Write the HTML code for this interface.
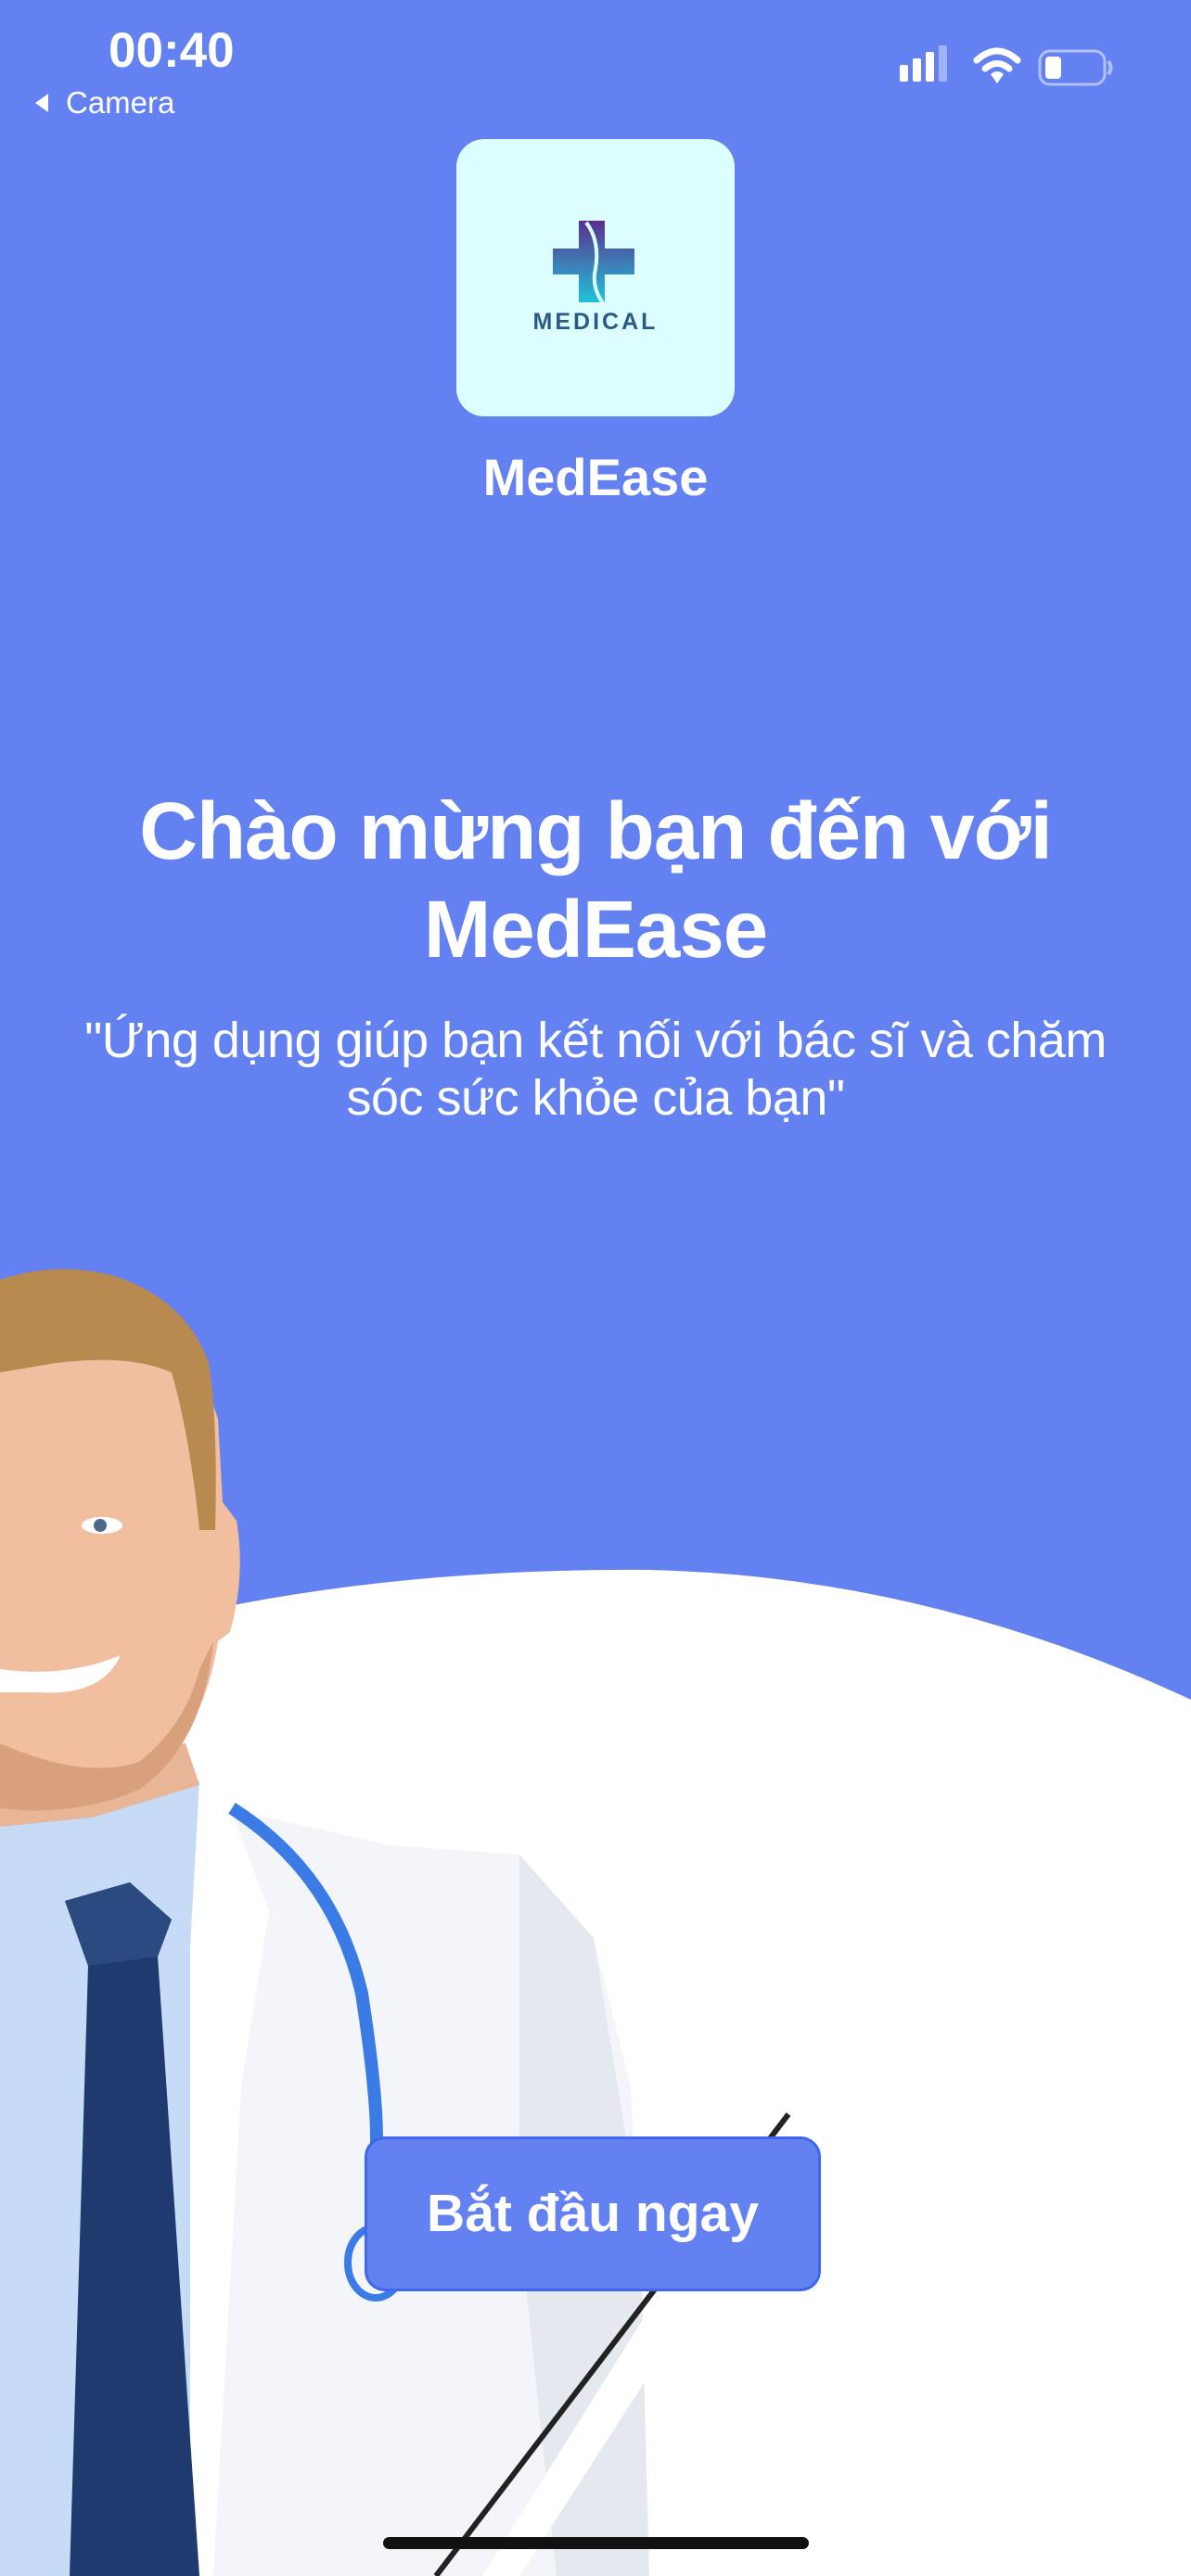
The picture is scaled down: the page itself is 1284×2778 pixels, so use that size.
<!DOCTYPE html>
<html><head><meta charset="utf-8"><style>
html,body{margin:0;padding:0}
body{width:1284px;height:2778px;position:relative;overflow:hidden;background:#6381F1;font-family:"Liberation Sans","Noto Sans CJK SC",sans-serif;color:#fff}
.abs{position:absolute}
.c{left:0;width:1284px;text-align:center}
</style></head><body>
<svg class="abs" style="left:0;top:0" width="1284" height="2778" viewBox="0 0 1284 2778">
  <path d="M0 1800 Q300 1690 700 1693 Q1000 1700 1284 1833 L1284 2778 L0 2778 Z" fill="#fff"/>
  <path d="M0 1990 L200 1940 L420 1990 L560 2000 L640 2090 L680 2250 L690 2500 L700 2778 L0 2778 Z" fill="#F3F5F9"/>
  <path d="M560 2000 L640 2090 L690 2400 L700 2778 L600 2778 L560 2400 Z" fill="#E4E8EF"/>
  <path d="M0 1950 L190 1920 L215 1920 L225 2080 L215 2778 L0 2778 Z" fill="#C6DCF6"/>
  <path d="M215 1920 L240 1930 L290 2060 L260 2250 L230 2778 L205 2778 L205 2100 Z" fill="#fff"/>
  <path d="M70 2050 L140 2030 L185 2070 L170 2110 L215 2778 L75 2778 L95 2120 Z" fill="#1F3A6E"/>
  <path d="M70 2050 L140 2030 L185 2070 L170 2110 L95 2120 Z" fill="#2A4A80"/>
  <path d="M250 1950 Q360 2020 390 2150 Q410 2280 405 2330" stroke="#3B7BE6" stroke-width="14" fill="none"/>
  <ellipse cx="405" cy="2440" rx="30" ry="38" fill="none" stroke="#3B7BE6" stroke-width="8"/>
  <path d="M850 2280 L470 2778" stroke="#222" stroke-width="6"/>
  <path d="M700 2490 L520 2778 L560 2778 L720 2530 Z" fill="#fff"/>
  <path d="M0 1900 L200 1880 L215 1925 L100 1960 L0 1970 Z" fill="#E8B596"/>
  <path d="M0 1400 L120 1380 L200 1430 L235 1530 L240 1620 L255 1640 Q265 1700 248 1760 L235 1770 Q220 1870 150 1930 Q80 1960 0 1950 Z" fill="#F1BFA0"/>
  <path d="M0 1880 Q90 1920 150 1900 Q200 1860 215 1800 L230 1770 Q220 1880 150 1930 Q80 1960 0 1950 Z" fill="#D9A07C"/>
  <path d="M0 1380 Q60 1360 120 1375 Q200 1400 225 1470 Q235 1530 232 1650 L215 1650 Q205 1550 185 1480 Q140 1460 60 1470 L0 1480 Z" fill="#B98A50"/>
  <ellipse cx="110" cy="1645" rx="22" ry="9" fill="#fff"/>
  <circle cx="108" cy="1645" r="7" fill="#4B6A8A"/>
  <path d="M0 1800 Q70 1810 130 1785 Q110 1830 40 1825 L0 1825 Z" fill="#fff"/>
  <rect x="970" y="70" width="9" height="18" rx="2" fill="#fff"/>
  <rect x="984" y="63" width="9" height="25" rx="2" fill="#fff"/>
  <rect x="998" y="56" width="9" height="32" rx="2" fill="#fff"/>
  <rect x="1012" y="49" width="9" height="39" rx="2" fill="#fff" opacity=".4"/>
  <path d="M1053 65 Q1075 45 1097 65" stroke="#fff" stroke-width="7" fill="none" stroke-linecap="round"/>
  <path d="M1062 74 Q1075 63 1088 74" stroke="#fff" stroke-width="7" fill="none" stroke-linecap="round"/>
  <path d="M1068 80 L1075 90 L1082 80 Q1075 74 1068 80 Z" fill="#fff"/>
  <rect x="1121" y="55" width="70" height="36" rx="11" fill="none" stroke="#fff" stroke-opacity=".5" stroke-width="3"/>
  <rect x="1127" y="61" width="17" height="24" rx="4" fill="#fff"/>
  <path d="M1195 66 Q1200 73 1195 80" stroke="#fff" stroke-opacity=".5" stroke-width="4" fill="none"/>
  <path d="M38 111 L52 101 L52 121 Z" fill="#fff"/>
  <rect x="413" y="2736" width="459" height="13" rx="6.5" fill="#111"/>
</svg>
<div class="abs" style="left:117px;top:24px;font-size:53px;font-weight:bold">00:40</div>
<div class="abs" style="left:71px;top:92px;font-size:33px">Camera</div>
<div class="abs" style="left:492px;top:150px;width:300px;height:299px;background:#DDFEFE;border-radius:30px">
  <svg width="300" height="299" viewBox="0 0 300 299">
    <defs><linearGradient id="g" x1="0" y1="0" x2="0" y2="1"><stop offset="0" stop-color="#5B2F8E"/><stop offset="1" stop-color="#22C3D8"/></linearGradient></defs>
    <path d="M104 118 H132 V88 H160 V118 H192 V146 H160 V176 H132 V146 H104 Z" fill="url(#g)"/>
    <path d="M140 90 Q155 110 150 140 Q145 160 160 180" stroke="#DDFEFE" stroke-width="4" fill="none"/>
    <text x="150" y="205" text-anchor="middle" font-family="Liberation Sans" font-weight="bold" font-size="25" letter-spacing="3" fill="#2C5A86">MEDICAL</text>
  </svg>
</div>
<div class="abs c" style="top:482px;font-size:56px;font-weight:bold">MedEase</div>
<div class="abs c" style="top:844px;font-size:87px;font-weight:bold;line-height:106px;letter-spacing:-1px">Chào mừng bạn đến với<br>MedEase</div>
<div class="abs c" style="top:1091px;font-size:54px;line-height:62px;letter-spacing:-0.5px">"Ứng dụng giúp bạn kết nối với bác sĩ và chăm<br>sóc sức khỏe của bạn"</div>
<div class="abs" style="left:393px;top:2304px;width:492px;height:167px;box-sizing:border-box;border:3px solid #3E66EE;border-radius:22px;background:#6381F1;text-align:center;line-height:161px;font-size:57px;font-weight:bold">Bắt đầu ngay</div>
</body></html>
